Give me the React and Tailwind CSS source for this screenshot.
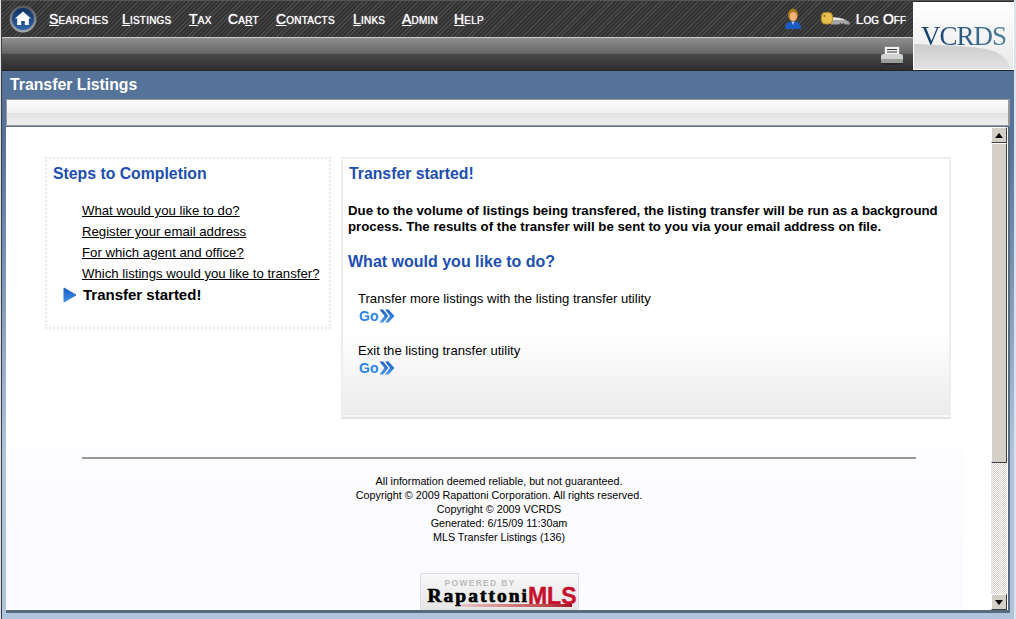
const NAV = [
  { label: 'Searches', key: 'S', rest: 'earches', width: 'w-[73px]' },
  { label: 'Listings', key: 'L', rest: 'istings', width: 'w-[67px]' },
  { label: 'Tax', key: 'T', rest: 'ax', width: 'w-[39px]' },
  { label: 'Cart', pre: 'Ca', key: 'r', rest: 't', width: 'w-[48px]' },
  { label: 'Contacts', key: 'C', rest: 'ontacts', width: 'w-[77px]' },
  { label: 'Links', key: 'L', rest: 'inks', width: 'w-[49px]' },
  { label: 'Admin', key: 'A', rest: 'dmin', width: 'w-[52px]' },
  { label: 'Help', key: 'H', rest: 'elp', width: 'w-[40px]' },
];

const STEPS = [
  'What would you like to do?',
  'Register your email address',
  'For which agent and office?',
  'Which listings would you like to transfer?',
];

const FOOTER = [
  'All information deemed reliable, but not guaranteed.',
  'Copyright © 2009 Rapattoni Corporation. All rights reserved.',
  'Copyright © 2009 VCRDS',
  'Generated: 6/15/09 11:30am',
  'MLS Transfer Listings (136)',
];

function HomeButton() {
  return (
    <svg width="28" height="28" viewBox="0 0 28 28" className="shrink-0">
      <defs>
        <linearGradient id="homeBg" x1="0" y1="0" x2="0" y2="1">
          <stop offset="0" stopColor="#0f2f63" />
          <stop offset="1" stopColor="#2f66a8" />
        </linearGradient>
        <linearGradient id="homeRing" x1="0" y1="0" x2="0" y2="1">
          <stop offset="0" stopColor="#55585c" />
          <stop offset="1" stopColor="#a4a8ad" />
        </linearGradient>
      </defs>
      <circle cx="14" cy="14" r="13.5" fill="url(#homeRing)" />
      <circle cx="14" cy="14" r="11" fill="url(#homeBg)" />
      <path d="M14 6.5 L22 13.5 H19.8 V20 H15.8 V16 H12.2 V20 H8.2 V13.5 H6 Z" fill="#fff" />
    </svg>
  );
}

function PersonIcon() {
  return (
    <svg width="18" height="22" viewBox="0 0 18 22">
      <path d="M1 21 C1 15 4 13.5 9 13.5 C14 13.5 17 15 17 21 Z" fill="#1c5bc0" />
      <path d="M7.5 13.5 L9 17 L10.5 13.5 Z" fill="#bcd4f0" />
      <ellipse cx="9" cy="7" rx="5" ry="6.5" fill="#a87a1a" />
      <ellipse cx="9.3" cy="8.5" rx="3.6" ry="4.6" fill="#f2b27c" />
    </svg>
  );
}

function KeyIcon() {
  return (
    <svg width="29" height="14" viewBox="0 0 29 14">
      <path d="M10 5 C16 5 22 6 25 8 L28.5 10 V12.5 H24 L22.5 11 L21 12.5 L19.5 11 L18 12.5 H10 Z" fill="#a4a4a4" />
      <path d="M10 5.5 C16 5.5 20 6.2 24 8 H10 Z" fill="#e6e6e6" />
      <rect x="0.5" y="0.5" width="11" height="11.5" rx="4" fill="#e6c04f" stroke="#b78f22" />
      <circle cx="3.5" cy="4" r="1" fill="#8f6d12" />
    </svg>
  );
}

function PrinterIcon() {
  return (
    <svg width="22" height="20" viewBox="0 0 22 20">
      <rect x="3.5" y="0.5" width="15" height="10" rx="1" fill="#f4f4f4" stroke="#888" />
      <path d="M6 3.5 H16 M6 6 H16" stroke="#333" strokeWidth="1" />
      <rect x="0" y="8" width="22" height="9" rx="2" fill="#d2d2d2" />
      <rect x="0" y="13" width="22" height="4" rx="1" fill="#9c9c9c" />
      <rect x="17" y="13.5" width="2" height="2" fill="#7fae5b" />
      <rect x="1" y="17" width="20" height="2" fill="#222" opacity="0.6" />
    </svg>
  );
}

function LogoBox() {
  return (
    <div className="relative w-[101px] shrink-0 mt-[1px] mb-0 border border-white bg-gradient-to-b from-white to-[#e9e9e9] flex justify-center pt-[18px] overflow-hidden">
      <svg width="99" height="66" viewBox="0 0 99 66" className="absolute left-0 top-0">
        <defs>
          <linearGradient id="swoosh" x1="0" y1="0" x2="0" y2="1">
            <stop offset="0" stopColor="#cdcdcd" />
            <stop offset="1" stopColor="#e2e2e2" />
          </linearGradient>
        </defs>
        <path d="M0 41 C40 43 68 43 82 49 C90 53 95 60 97 66 L0 66 Z" fill="url(#swoosh)" />
      </svg>
      <span className="relative h-[30px] font-['Liberation_Serif',serif] text-[27px] leading-[30px] tracking-[-1px] bg-gradient-to-r from-[#0f3a66] to-[#4f7f9c] bg-clip-text text-transparent">
        VCRDS
      </span>
    </div>
  );
}

function GoLink() {
  return (
    <div className="flex items-center h-[16px] pl-[1px] text-[14px] leading-[16px] font-bold text-[#2a86e8]">
      <span>Go</span>
      <svg width="16" height="14" viewBox="0 0 16 14" className="ml-[1px]">
        <defs>
          <linearGradient id="goFill" x1="0" y1="0" x2="0" y2="1">
            <stop offset="0" stopColor="#1e5fc8" />
            <stop offset="1" stopColor="#4a96ea" />
          </linearGradient>
        </defs>
        <path d="M0.5 0.5 H4 L9.5 7 L4 13.5 H0.5 L5.5 7 Z" fill="url(#goFill)" />
        <path d="M6 0.5 H9.5 L15.5 7 L9.5 13.5 H6 L11 7 Z" fill="url(#goFill)" />
      </svg>
    </div>
  );
}

function ScrollArrow({ up }) {
  return (
    <div className="h-[16px] w-[16px] shrink-0 flex items-center justify-center bg-[#d4d0c8] border-t border-l border-t-white border-l-white border-r border-b border-r-[#404040] border-b-[#404040]">
      <svg width="8" height="5" viewBox="0 0 8 5">
        <path d={up ? 'M4 0 L8 5 H0 Z' : 'M0 0 H8 L4 5 Z'} fill="#000" />
      </svg>
    </div>
  );
}

function Scrollbar() {
  return (
    <div className="w-[16px] shrink-0 flex flex-col bg-[repeating-conic-gradient(#d4d0c8_0%_25%,#ffffff_0%_50%)] bg-[length:2px_2px]">
      <ScrollArrow up />
      <div className="h-[320px] bg-[#d4d0c8] border-t border-l border-t-white border-l-white border-r border-b border-r-[#404040] border-b-[#404040]" />
      <div className="flex-1" />
      <ScrollArrow />
    </div>
  );
}

function StepsPanel() {
  return (
    <div className="w-[286px] h-[172px] shrink-0 border-2 border-dotted border-[#e8e8e8] pt-[5px] pl-[6px]">
      <h2 className="text-[15.8px] leading-[20px] font-bold text-[#1c4fb0]">Steps to Completion</h2>
      <ul className="mt-[16px] ml-[29px] text-[13.2px] text-black">
        {STEPS.map((step) => (
          <li key={step} className="h-[21px] leading-[21px] underline whitespace-nowrap">{step}</li>
        ))}
        <li className="h-[21px] leading-[21px] font-bold text-[15px] flex items-center relative">
          <svg width="14" height="16" viewBox="0 0 14 16" className="absolute left-[-19px] top-[3px]">
            <defs>
              <linearGradient id="stepArrow" x1="0" y1="0" x2="0" y2="1">
                <stop offset="0" stopColor="#1a5cc4" />
                <stop offset="1" stopColor="#3d8fe6" />
              </linearGradient>
            </defs>
            <path d="M1 1 L13 8 L1 15 Z" fill="url(#stepArrow)" stroke="url(#stepArrow)" strokeLinejoin="round" />
          </svg>
          <span className="ml-[1px]">Transfer started!</span>
        </li>
      </ul>
    </div>
  );
}

function ResultPanel() {
  return (
    <div className="w-[610px] h-[262px] shrink-0 border-2 border-[#eeeeee] border-b-[#e2e2e2] bg-gradient-to-b from-white from-[68%] to-[#ebebeb] shadow-[inset_0_-2px_0_#f8f8f8] pt-[5px] pl-[6px]">
      <h2 className="text-[15.8px] leading-[20px] font-bold text-[#1c4fb0]">Transfer started!</h2>
      <p className="mt-[19px] -ml-[1px] text-[13.25px] leading-[16px] font-bold text-black w-[600px]">
        Due to the volume of listings being transfered, the listing transfer will be run as a background process. The results of the transfer will be sent to you via your email address on file.
      </p>
      <h2 className="mt-[17px] -ml-[1px] text-[16px] leading-[20px] font-bold text-[#1c4fb0]">What would you like to do?</h2>
      <div className="mt-[18px] ml-[9px] text-[13.1px] text-black">
        <div className="h-[18px] leading-[18px]">Transfer more listings with the listing transfer utility</div>
        <GoLink />
        <div className="h-[18px] leading-[18px] mt-[18px]">Exit the listing transfer utility</div>
        <GoLink />
      </div>
    </div>
  );
}

function PoweredBy() {
  return (
    <div className="relative mt-[29px] w-[159px] h-[37px] shrink-0 border-x border-t border-[#dddddd] rounded-t-[2px] bg-gradient-to-b from-[#f8f8f8] to-[#e6e6e6] overflow-hidden">
      <div className="ml-[24px] mt-[5px] text-[8.5px] leading-[9px] font-bold text-[#bbbbbb] tracking-[1.3px] whitespace-nowrap">POWERED BY</div>
      <div className="flex items-baseline ml-[7px] h-[12px] leading-[12px] whitespace-nowrap">
        <span className="font-['Liberation_Serif',serif] text-[19.5px] font-bold text-black tracking-[2px] [-webkit-text-stroke:0.7px_#000]">Rapattoni</span>
        <span className="relative top-[2px] -ml-[1px] text-[23px] font-bold text-[#c8102e] [-webkit-text-stroke:0.4px_#c8102e]">MLS</span>
      </div>
      <div className="absolute left-[40px] right-[6px] top-[30px] h-[3px] bg-gradient-to-r from-[#e8c4c8] to-[#a80c28]" />
    </div>
  );
}

function Footer() {
  return (
    <div className="w-[958px] mt-[28px] bg-gradient-to-b from-[#fdfdff] to-[#fafaff] flex-1 pl-[76px]">
      <div className="w-[834px] flex flex-col items-center">
        <div className="w-[834px] h-[2px] mt-[10px] bg-[#999999]" />
        <div className="mt-[15px] text-[10.75px] leading-[14px] text-black text-center">
          {FOOTER.map((line) => (
            <div key={line}>{line}</div>
          ))}
        </div>
        <PoweredBy />
      </div>
    </div>
  );
}

export default function App() {
  return (
    <div className="w-[1016px] h-[619px] overflow-hidden flex bg-[#dde3ea] pl-[1px] pr-[2px] font-['Liberation_Sans',Arial,sans-serif]">
      <div className="flex-1 min-w-0 flex flex-col border-l border-[#3c3c3c] bg-[#dde3ea]">
        <div className="flex h-[71px] shrink-0 bg-[#2a2a2a] border-t border-[#555] border-b border-b-[#222]">
          <div className="flex-1 flex flex-col min-w-0">
            <div className="h-[36px] flex items-center pl-[7px] pr-[7px] bg-[repeating-linear-gradient(135deg,#4a4a4a_0px,#4a4a4a_1px,#333333_1px,#333333_3px)]">
              <HomeButton />
              <nav className="flex items-center ml-[12px] text-[14px] tracking-[0.2px] text-white [font-variant:small-caps] [text-shadow:0_0_1px_#ffffff]">
                {NAV.map(({ label, pre, key, rest, width }) => (
                  <span key={label} className={width}>
                    {pre}
                    <span className="underline">{key}</span>
                    {rest}
                  </span>
                ))}
              </nav>
              <div className="ml-auto flex items-center">
                <PersonIcon />
                <div className="ml-[19px]"><KeyIcon /></div>
                <span className="ml-[6px] text-[14px] text-white [font-variant:small-caps] [text-shadow:0_0_1px_#ffffff]">Log Off</span>
              </div>
            </div>
            <div className="flex-1 flex items-end justify-end pr-[10px] pb-[4px] border-t border-t-[#cccccc] bg-[linear-gradient(to_bottom,#8e8e8e_0%,#666666_48%,#484848_50%,#2e2e2e_100%)]">
              <PrinterIcon />
            </div>
          </div>
          <LogoBox />
        </div>

        <div className="flex-1 flex flex-col min-h-0 pl-[4px] pr-[4px] bg-[linear-gradient(to_bottom,#557299_0%,#557299_12%,#b0c4de_70%,#b0c4de_100%)]">
          <div className="h-[28px] shrink-0 flex items-center pl-[4px] text-[15.8px] font-bold text-white">Transfer Listings</div>
          <div className="h-[27px] shrink-0 border border-[#9a9a9a] border-r-2 bg-[linear-gradient(to_bottom,#ffffff_0%,#f0f0f0_50%,#e2e2e2_51%,#eeeeee_100%)]" />
          <div className="h-[483px] shrink-0 flex bg-white mt-[1px] pr-[1px] border-r-2 border-[#5a6a7d]">
            <div className="flex-1 min-w-0 flex flex-col overflow-hidden pt-[30px]">
              <div className="flex ml-[39px] gap-[10px] shrink-0">
                <StepsPanel />
                <ResultPanel />
              </div>
              <Footer />
            </div>
            <Scrollbar />
          </div>
          <div className="h-[3px] shrink-0 bg-[#5a6a7d]" />
        </div>
      </div>
    </div>
  );
}
